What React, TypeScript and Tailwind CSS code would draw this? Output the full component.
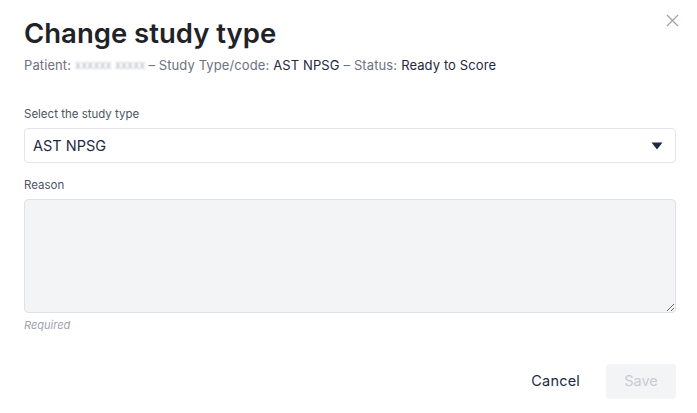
import React from "react";

export default function App() {
  return (
    <div
      className="relative w-[697px] h-[413px] bg-white text-[#1f2937] overflow-hidden"
      style={{ fontFamily: "Inter, 'Noto Sans', sans-serif" }}
    >
      <button className="absolute right-[18px] top-[14px] text-[#9ca3af]">
        <svg width="13" height="13" viewBox="0 0 13 13" fill="none" stroke="currentColor" strokeWidth="1.3">
          <path d="M1 1L12 12M12 1L1 12" />
        </svg>
      </button>
      <div className="pl-6 pr-[21px] pt-[16px]">
        <h1 className="text-[27.5px] leading-[34px] font-semibold text-[#1f2328] tracking-[0px]">
          Change study type
        </h1>
        <p className="mt-[6px] text-[13px] leading-[18px] text-[#6b7280] flex items-center tracking-[0.1px]">
          <span>Patient:</span>
          <span className="ml-[4px] blur-[1.2px] text-[#b0b4bb] text-[11px]">xxxxxx xxxxx</span>
          <span className="ml-[3px]">– Study Type/code:</span>
          <span className="ml-[4px] text-[#1e293b]">AST NPSG</span>
          <span className="ml-[4px]">– Status:</span>
          <span className="ml-[4px] text-[#1e293b]">Ready to Score</span>
        </p>

        <div className="mt-[32px]">
          <label className="block text-[11.5px] leading-[16px] text-[#4b5563]">Select the study type</label>
          <div className="mt-[6px] h-[35px] rounded-[4px] border border-[#e2e5ea] flex items-center justify-between pl-[8px] pr-[12px]">
            <span className="text-[14.5px] text-[#1e2a44]">AST NPSG</span>
            <svg width="12" height="8" viewBox="0 0 12 8">
              <path d="M0.5 0.5H11.5L6 7.5Z" fill="#1e2a44" />
            </svg>
          </div>
        </div>

        <div className="mt-[14px]">
          <label className="block text-[11.5px] leading-[16px] text-[#4b5563]">Reason</label>
          <textarea
            className="mt-[6px] block w-full h-[114px] rounded-[4px] border border-[#dfe3e8] bg-[#f3f4f6] resize-y outline-none"
            readOnly
          />
          <p className="mt-[4px] text-[11px] italic text-[#9ca3af]">Required</p>
        </div>

        <div className="mt-[30px] flex justify-end items-center gap-[26px]">
          <button className="text-[14.5px] text-[#1e2a44] tracking-[0.2px]">Cancel</button>
          <button className="w-[70px] h-[35px] rounded-[4px] bg-[#f3f4f6] text-[14.5px] text-[#c9ccd3]">Save</button>
        </div>
      </div>
    </div>
  );
}
